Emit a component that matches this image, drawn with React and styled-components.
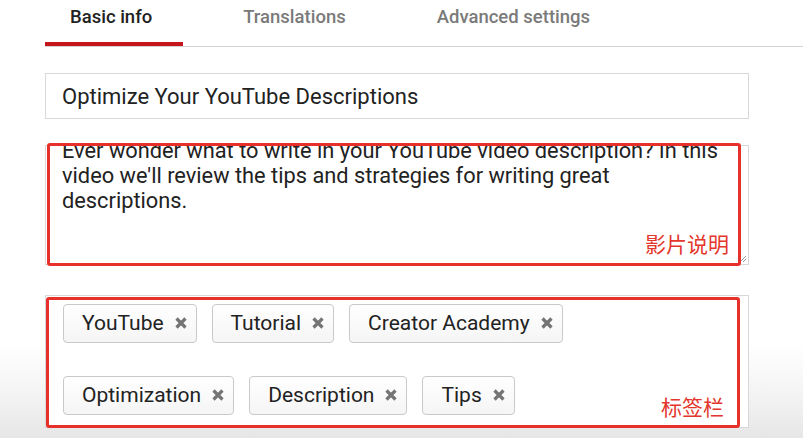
import React from "react";
import styled, { createGlobalStyle } from "styled-components";

const GlobalStyle = createGlobalStyle`
  html, body { margin: 0; padding: 0; }
  body {
    width: 803px;
    height: 438px;
    overflow: hidden;
    font-family: Roboto, "Liberation Sans", Arial, sans-serif;
    color: #222;
    background: linear-gradient(to bottom, #ffffff 0px, #ffffff 345px, #f2f2f2 400px, #e6e6e6 438px);
  }
`;

const Page = styled.div`
  padding-left: 45px;
  display: flex;
  flex-direction: column;
`;

const TabBar = styled.div`
  display: flex;
  gap: 35px;
  height: 46px;
  border-bottom: 1.5px solid #d2d2d2;
`;

const Tab = styled.div`
  box-sizing: border-box;
  height: 46px;
  padding: 5px 31px 0 25px;
  font-size: 18.5px;
  line-height: 24px;
  font-weight: 500;
  color: ${(p) => (p.$active ? "#222" : "#7a7a7a")};
  border-bottom: 4.5px solid ${(p) => (p.$active ? "#c5161d" : "transparent")};
  white-space: nowrap;
`;

const Form = styled.div`
  width: 704px;
  display: flex;
  flex-direction: column;
`;

const Field = styled.div`
  position: relative;
  margin-top: ${(p) => p.$top}px;
`;

const TitleInput = styled.div`
  box-sizing: border-box;
  height: 46px;
  border: 1.5px solid #d8d8d8;
  background: #fff;
  padding: 0 16px;
  display: flex;
  align-items: center;
  font-size: 22px;
  color: #222;
  white-space: nowrap;
`;

const DescBox = styled.div`
  position: relative;
  box-sizing: border-box;
  height: 120px;
  border: 1.5px solid #d8d8d8;
  background: #fff;
  overflow: hidden;
  padding: 0 16px;
`;

const DescText = styled.div`
  margin-top: -8px;
  font-size: 21.8px;
  line-height: 25px;
  color: #222;
  white-space: pre-line;
`;

const Grip = styled.svg`
  position: absolute;
  right: 1px;
  bottom: 1px;
  width: 9px;
  height: 9px;
`;

const TagBox = styled.div`
  box-sizing: border-box;
  height: 133px;
  border: 1.5px solid #d8d8d8;
  background: #fff;
  padding: 7.5px 0 0 17px;
  display: flex;
  flex-wrap: wrap;
  align-content: flex-start;
  column-gap: 15px;
  row-gap: 33px;
`;

const Chip = styled.div`
  box-sizing: border-box;
  height: 39px;
  display: flex;
  align-items: center;
  gap: 11px;
  padding: 0 9px 0 18px;
  border: 1px solid #c9c9c9;
  border-radius: 4px;
  background: linear-gradient(to bottom, #ffffff, #f5f5f5);
  font-size: 21px;
  color: #222;
  white-space: nowrap;
`;

const CloseIcon = styled.svg`
  width: 12px;
  height: 12px;
  flex: none;
`;

const Annotation = styled.div`
  position: absolute;
  top: ${(p) => p.$t}px;
  left: ${(p) => p.$l}px;
  right: ${(p) => p.$r}px;
  bottom: ${(p) => p.$b}px;
  border: 3px solid #e8302a;
  border-radius: 3px;
  pointer-events: none;
`;

const AnnotationLabel = styled.span`
  position: absolute;
  right: ${(p) => p.$r}px;
  bottom: ${(p) => p.$b}px;
  font-family: "Noto Sans CJK SC", "Noto Sans", sans-serif;
  font-size: 21px;
  line-height: 1;
  color: #e3362c;
`;

const tabs = ["Basic info", "Translations", "Advanced settings"];
const tags = ["YouTube", "Tutorial", "Creator Academy", "Optimization", "Description", "Tips"];

const X = () => (
  <CloseIcon viewBox="0 0 12 12">
    <path d="M1.5 1.5 L10.5 10.5 M10.5 1.5 L1.5 10.5" stroke="#747474" strokeWidth="3.2" strokeLinecap="butt" />
  </CloseIcon>
);

export default function App() {
  return (
    <>
      <GlobalStyle />
      <Page>
        <TabBar>
          {tabs.map((t, i) => (
            <Tab key={t} $active={i === 0}>
              {t}
            </Tab>
          ))}
        </TabBar>
        <Form>
          <Field $top={26}>
            <TitleInput>Optimize Your YouTube Descriptions</TitleInput>
          </Field>
          <Field $top={26}>
            <DescBox>
              <DescText>
                {"Ever wonder what to write in your YouTube video description? In this\nvideo we'll review the tips and strategies for writing great\ndescriptions."}
              </DescText>
              <Grip viewBox="0 0 9 9">
                <path d="M8 2 L2 8 M8 5 L5 8" stroke="#9a9a9a" strokeWidth="1" />
              </Grip>
            </DescBox>
            <Annotation $t={-2} $l={2} $r={8} $b={-1}>
              <AnnotationLabel $r={9} $b={9}>影片说明</AnnotationLabel>
            </Annotation>
          </Field>
          <Field $top={30}>
            <TagBox>
              {tags.map((t) => (
                <Chip key={t}>
                  {t}
                  <X />
                </Chip>
              ))}
            </TagBox>
            <Annotation $t={2} $l={1} $r={9} $b={0}>
              <AnnotationLabel $r={13} $b={8}>标签栏</AnnotationLabel>
            </Annotation>
          </Field>
        </Form>
      </Page>
    </>
  );
}
